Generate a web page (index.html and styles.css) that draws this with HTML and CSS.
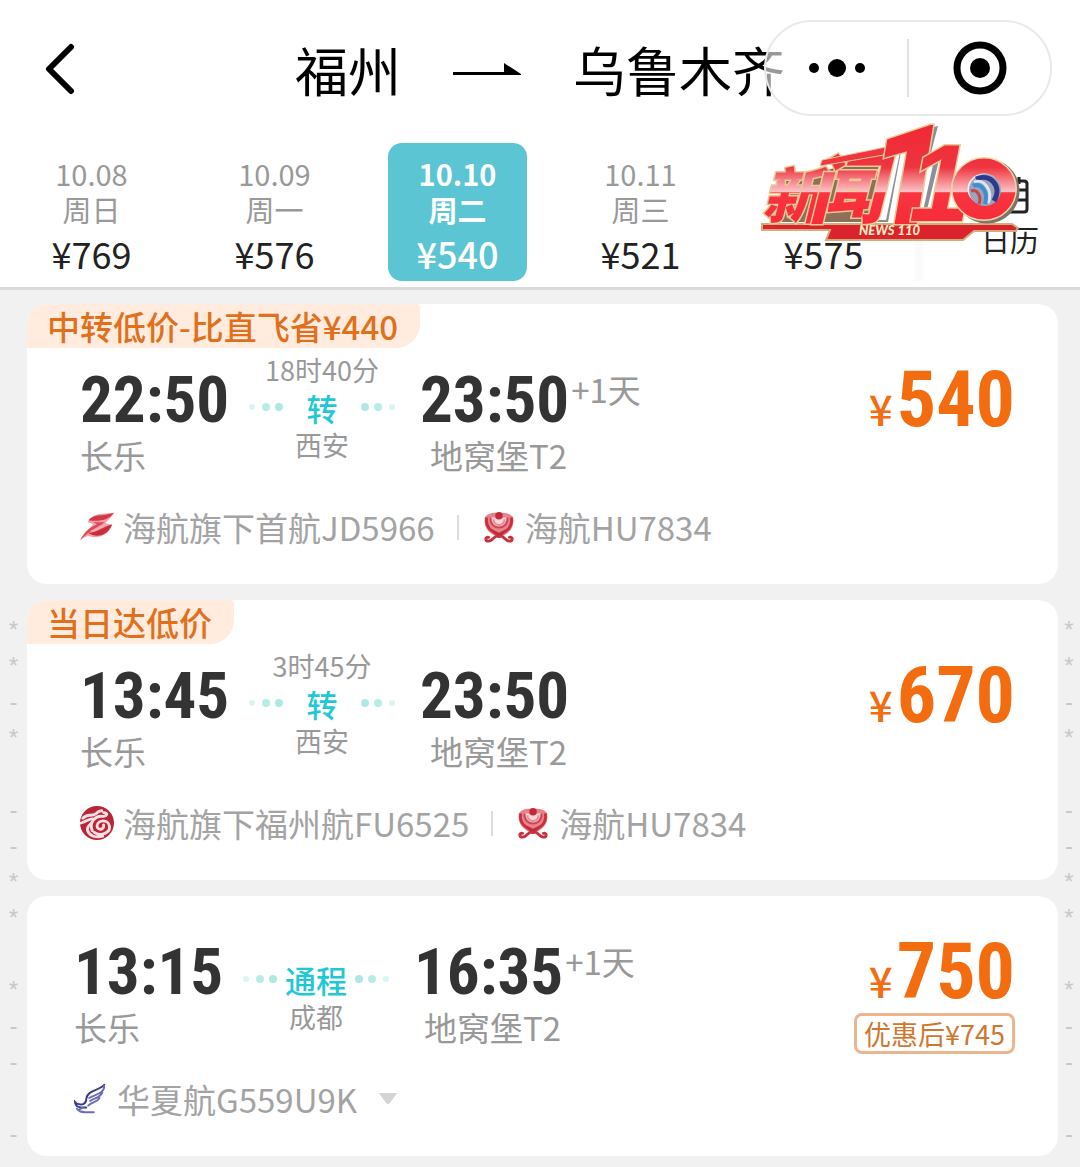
FILE: index.html
```html
<!DOCTYPE html>
<html lang="zh-CN">
<head>
<meta charset="utf-8">
<meta name="viewport" content="width=device-width, initial-scale=1">
<title>福州 - 乌鲁木齐</title>
<link rel="stylesheet" href="styles.css">
</head>
<body>

<!-- shared icons -->
<svg class="defs" aria-hidden="true">
  <symbol id="hainan" viewBox="0 0 36 36">
    <path d="M3 8 C1 20 9 26 18 29 C27 26 35 20 33 8 C30 3 24 3 18 3 C12 3 6 3 3 8Z" fill="#e8838c"/>
    <path d="M5 8 C3 19 11 23 18 27 C25 23 33 19 31 8" fill="none" stroke="#c9303d" stroke-width="3"/>
    <path d="M9 8 C8 22 28 22 27 8" fill="#f7d5d8" stroke="#cf4450" stroke-width="2"/>
    <path d="M12 10 C13 18 23 18 24 10" fill="none" stroke="#e58a92" stroke-width="2"/>
    <circle cx="18" cy="6" r="4" fill="#c22a38"/>
    <path d="M10 20 L18 29 L26 20 L18 24Z" fill="#c22a38"/>
    <path d="M17 28 C13 26 12 33 7 33 C3 33 3 28 7 29 M19 28 C23 26 24 33 29 33 C33 33 33 28 29 29" fill="none" stroke="#c9303d" stroke-width="3" stroke-linecap="round"/>
  </symbol>
  <symbol id="capital" viewBox="0 0 36 36">
    <path d="M0 32 C5 25 10 19 14 15 L8 13 C12 7 18 4 23 4 L36 3 C33 9 29 11 27 14 L34 16 C31 25 21 31 11 28 C7 27 4 29 0 32Z" fill="#f3a0a8"/>
    <path d="M9 11 C16 3 22 8 36 3 C29 12 20 12 9 11Z" fill="#d53845"/>
    <path d="M14 13 L26 13 C20 18 11 21 0 32 C6 20 13 18 18 15Z" fill="#d94b57"/>
    <path d="M8 24 C17 25 23 18 34 15 C30 26 19 31 8 24Z" fill="#cb2d3b"/>
    <path d="M12 22 C19 21 23 18 27 15" fill="none" stroke="#f6bdc2" stroke-width="1"/>
  </symbol>
  <symbol id="fuzhou" viewBox="0 0 36 36">
    <circle cx="18" cy="18" r="18" fill="#b82536"/>
    <path d="M3 13 C8 7 12 12 17 8 C19 6 20 5 23 5 M1 18 C8 16 12 12 14 14 C16 17 6 20 8 26 C10 32 17 34 24 32 M13 26 C9 17 17 10 24 11 C29 11 30 7 25 7 M15 28 C22 33 33 28 31 21 C30 14 19 14 18 21 C18 26 26 26 25 20" fill="none" stroke="#fbdfe1" stroke-width="3" stroke-linecap="round"/>
  </symbol>
  <symbol id="huaxia" viewBox="0 0 36 36">
    <path d="M32 3 C28 9 14 8 13 18 C13 23 9 25 3 23 L1 21 C2 28 8 27 13 27" fill="none" stroke="#3a3a8c" stroke-width="2" stroke-linecap="round"/>
    <path d="M32 4 C32 13 22 13 16 17 M30 11 C28 17 21 17 17 20 M27 17 C25 21 19 21 15 25 M3 28 C6 33 14 32 21 32 M10 27 C4 29 4 32 11 32" fill="none" stroke="#6c6cb8" stroke-width="2" stroke-linecap="round"/>
  </symbol>
  <symbol id="dots" viewBox="0 0 38 12">
    <circle cx="6" cy="6" r="3" fill="#d9f5f5"/>
    <circle cx="20" cy="6" r="4" fill="#b9ece9"/>
    <circle cx="33" cy="6" r="4" fill="#b0e8e5"/>
  </symbol>
</svg>

<header class="top">
  <div class="title-bar">
    <button class="back" type="button" aria-label="返回">
      <svg width="30" height="52" viewBox="0 0 30 52"><path d="M26 4 L4 26 L26 48" fill="none" stroke="#000" stroke-width="6" stroke-linecap="round" stroke-linejoin="round"/></svg>
    </button>
    <h1 class="route">
      <span>福州</span>
      <svg width="68" height="16" viewBox="0 0 68 16"><path d="M0 11 H51 V2 L68 13 V14 H0Z" fill="#000"/></svg>
      <span>乌鲁木齐</span>
    </h1>
    <div class="capsule">
      <button type="button" aria-label="更多">
        <svg width="58" height="20" viewBox="0 0 58 20"><circle cx="6" cy="10" r="5"/><circle cx="29" cy="10" r="9"/><circle cx="52" cy="10" r="5"/></svg>
      </button>
      <button type="button" aria-label="关闭">
        <svg width="54" height="54" viewBox="0 0 54 54"><circle cx="27" cy="27" r="23" fill="none" stroke="#000" stroke-width="7"/><circle cx="27" cy="27" r="10"/></svg>
      </button>
    </div>
  </div>

  <nav class="dates">
    <button class="day" type="button"><span>10.08</span><span>周日</span><b>¥769</b></button>
    <button class="day" type="button"><span>10.09</span><span>周一</span><b>¥576</b></button>
    <button class="day active" type="button" aria-current="date"><span>10.10</span><span>周二</span><b>¥540</b></button>
    <button class="day" type="button"><span>10.11</span><span>周三</span><b>¥521</b></button>
    <button class="day" type="button"><span></span><span></span><b>¥575</b></button>
    <button class="calendar" type="button">
      <svg width="36" height="40" viewBox="0 0 36 40"><path d="M5 6 H31 Q34 6 34 9 V34 Q34 37 31 37 H5 Q2 37 2 34 V9 Q2 6 5 6Z M2 15 H34 M10 25 H34 M10 2 V9 M26 2 V9" fill="none" stroke="#222" stroke-width="3"/></svg>
      <span>日历</span>
    </button>
  </nav>

  <!-- programme logo over the date strip -->
  <svg class="news-logo" width="264" height="124" viewBox="0 0 264 124" role="img" aria-label="新闻110">
    <defs>
      <linearGradient id="red" gradientUnits="userSpaceOnUse" x1="0" y1="10" x2="0" y2="108">
        <stop offset="0" stop-color="#f02a35"/>
        <stop offset=".38" stop-color="#ee3540"/>
        <stop offset=".63" stop-color="#fbc3c6"/>
        <stop offset=".64" stop-color="#f9353f"/>
        <stop offset="1" stop-color="#f52a38"/>
      </linearGradient>
    </defs>
    <path d="M26 60 L66 50 L120 38 L110 102 L14 102Z" fill="#8d7058"/>
    <path d="M126 32 L142 26 L128 102 L108 102Z" fill="#8c8f98"/>
    <path d="M127 32 L134 30 L118 100 L112 100Z" fill="#27358c"/>
    <path d="M132 34 L140 32 L126 100 L117 100Z" fill="#fff"/>
    <path d="M170 8 L178 6 L168 44 L180 36 L164 102 L150 102Z" fill="#8c8f98"/>
    <path d="M165 42 L174 40 L162 96 L153 98Z" fill="#fff"/>
    <path d="M165 42 L174 40 L173 45 L164 47Z" fill="#27358c"/>
    <path d="M2 104 H252 L258 108 L256 111 H214 L203 120 H66 L70 110 H2Z" fill="#dc222c" stroke="#cfae7c" stroke-width="2"/>
    <text class="logo-cn" x="2" y="98" font-size="60">新</text>
    <text class="logo-cn" x="49" y="97" font-size="74">闻</text>
    <path d="M62 40 L126 27 L124 35 L60 46Z" fill="#ee3540" stroke="#e9c995" stroke-width="1"/>
    <text class="logo-num" x="109" y="104" font-size="138">1</text>
    <text class="logo-num slab" x="149" y="101" font-size="110">1</text>
    <ellipse cx="227" cy="71" rx="24" ry="24" fill="none" stroke="#7d7568" stroke-width="17"/>
    <ellipse cx="224" cy="69" rx="24" ry="23" fill="none" stroke="#f0d6a8" stroke-width="18"/>
    <ellipse cx="224" cy="69" rx="24" ry="23" fill="#f6f6fa" stroke="url(#red)" stroke-width="15"/>
    <circle cx="225" cy="70" r="16" fill="#9aa3b8"/>
    <path d="M216 59 C230 53 243 66 234 81" fill="none" stroke="#2b3a8c" stroke-width="5"/>
    <path d="M214 62 C223 58 234 70 228 83" fill="none" stroke="#dfe6f0" stroke-width="3"/>
    <path d="M213 66 C220 62 229 71 225 84" fill="none" stroke="#3f8fd0" stroke-width="4"/>
    <path d="M211 71 C217 69 222 76 219 84" fill="none" stroke="#c4454e" stroke-width="3"/>
    <text class="logo-en" x="99" y="115">NEWS 110</text>
  </svg>
</header>

<main class="list">
<div class="marks" aria-hidden="true">*
*
-
*

-
-
*
*

*
-
-

-</div>

<div class="cards">
  <article class="card">
    <p class="tag">中转低价-比直飞省¥440</p>
    <div class="trip">
      <div class="stop"><time>22:50</time><p>长乐</p></div>
      <div class="via">
        <p>18时40分</p>
        <p class="kind"><svg><use href="#dots"/></svg><b>转</b><svg class="flip"><use href="#dots"/></svg></p>
        <p>西安</p>
      </div>
      <div class="stop arrive"><time>23:50</time><sup>+1天</sup><p>地窝堡T2</p></div>
      <div class="price"><p class="fare"><i>¥</i>540</p></div>
    </div>
    <div class="airlines">
      <span><svg><use href="#capital"/></svg>海航旗下首航JD5966</span>
      <span><svg><use href="#hainan"/></svg>海航HU7834</span>
    </div>
  </article>

  <article class="card">
    <p class="tag">当日达低价</p>
    <div class="trip">
      <div class="stop"><time>13:45</time><p>长乐</p></div>
      <div class="via">
        <p>3时45分</p>
        <p class="kind"><svg><use href="#dots"/></svg><b>转</b><svg class="flip"><use href="#dots"/></svg></p>
        <p>西安</p>
      </div>
      <div class="stop arrive"><time>23:50</time><p>地窝堡T2</p></div>
      <div class="price"><p class="fare"><i>¥</i>670</p></div>
    </div>
    <div class="airlines">
      <span><svg><use href="#fuzhou"/></svg>海航旗下福州航FU6525</span>
      <span><svg><use href="#hainan"/></svg>海航HU7834</span>
    </div>
  </article>

  <article class="card plain">
    <div class="trip">
      <div class="stop"><time>13:15</time><p>长乐</p></div>
      <div class="via">
        <p></p>
        <p class="kind"><svg><use href="#dots"/></svg><b>通程</b><svg class="flip"><use href="#dots"/></svg></p>
        <p>成都</p>
      </div>
      <div class="stop arrive"><time>16:35</time><sup>+1天</sup><p>地窝堡T2</p></div>
      <div class="price"><p class="fare"><i>¥</i>750</p><p class="deal">优惠后¥745</p></div>
    </div>
    <div class="airlines">
      <span><svg><use href="#huaxia"/></svg>华夏航G559U9K</span>
      <svg class="more" viewBox="0 0 18 12"><path d="M0 0 H18 L11 10 Q9 12 7 10Z" fill="#d4d4d4"/></svg>
    </div>
  </article>
</div>

<div class="marks" aria-hidden="true">*
*
-
*

-
-
*
*

*
-
-

-</div>
</main>

</body>
</html>
```
FILE: styles.css
```css
* {
  box-sizing: border-box;
}

body {
  margin: 0;
  background: #f1f1f1;
  color: #222;
  font-family: "Noto Sans CJK SC", sans-serif;
}

p, h1 {
  margin: 0;
  font-weight: normal;
}

button {
  border: 0;
  padding: 0;
  background: none;
  color: inherit;
  font: inherit;
}

svg {
  display: block;
  flex: none;
}

.defs {
  position: absolute;
  width: 0;
  height: 0;
}

/* header */
.top {
  position: relative;
  background: #fff;
  border-bottom: 3px solid #dadada;
}

.title-bar {
  display: flex;
  align-items: center;
  height: 143px;
  padding: 0 45px 6px;
}

.back {
  width: 30px;
}

.route {
  flex: 1;
  display: flex;
  justify-content: center;
  align-items: center;
  gap: 52px;
  margin-right: 30px;
  color: #000;
  font-size: 53px;
  line-height: 80px;
  white-space: nowrap;
}

.capsule {
  position: absolute;
  top: 20px;
  right: 28px;
  display: flex;
  align-items: center;
  width: 288px;
  height: 96px;
  border: 2px solid #e9e9e9;
  border-radius: 48px;
  background: rgba(255, 255, 255, .6);
}

.capsule button {
  flex: 1;
  display: flex;
  justify-content: center;
  align-items: center;
  height: 58px;
}

.capsule button + button {
  border-left: 2px solid #e0e0e0;
}

.dates {
  display: grid;
  grid-template-columns: repeat(5, 1fr) 165px;
  padding-bottom: 6px;
}

.day {
  display: flex;
  flex-direction: column;
  align-items: center;
  height: 138px;
  margin: 0 22px;
  padding-top: 12px;
  border-radius: 14px;
  color: #999;
  font-size: 29px;
  line-height: 36px;
}

.day span {
  height: 36px;
}

.day b {
  color: #222;
  font-size: 36px;
  font-weight: normal;
  line-height: 52px;
}

.day.active {
  background: #5bc5d3;
  color: #fff;
  font-weight: bold;
}

.day.active b {
  color: #fff;
  font-weight: 500;
}

.calendar {
  display: flex;
  flex-direction: column;
  align-items: flex-end;
  gap: 4px;
  padding: 32px 41px 0 0;
  border-left: 8px solid #fafafa;
  font-size: 29px;
  line-height: 40px;
}

.calendar svg {
  margin-right: 10px;
}

.news-logo {
  position: absolute;
  top: 120px;
  right: 56px;
}

.logo-cn, .logo-num, .logo-en {
  font-style: italic;
  font-weight: 900;
}

.logo-cn, .logo-num {
  fill: url(#red);
  stroke: #e9c995;
  stroke-width: 3px;
  paint-order: stroke;
}

.logo-num {
  font-family: Roboto, sans-serif;
}

.logo-num.slab {
  font-family: "Liberation Sans", sans-serif;
}

.logo-en {
  fill: #fbeec4;
  font-family: Lato, sans-serif;
  font-size: 13px;
}

/* results */
.list {
  display: grid;
  grid-template-columns: 27px 1fr 22px;
  padding: 14px 0 10px;
}

.marks {
  padding-top: 308px;
  color: #c8c8c8;
  font-family: "Liberation Sans", sans-serif;
  font-size: 24px;
  line-height: 36px;
  text-align: center;
  white-space: pre;
}

.cards {
  display: flex;
  flex-direction: column;
  gap: 16px;
}

.card {
  padding: 0 43px 35px 53px;
  border-radius: 20px;
  background: #fff;
}

.plain {
  padding-top: 24px;
  padding-left: 47px;
}

.tag {
  width: fit-content;
  margin-left: -53px;
  padding: 0 22px 0 20px;
  border-radius: 20px 4px 24px 0;
  background: #ffecdf;
  color: #e0701c;
  font-size: 33px;
  font-weight: 500;
  line-height: 44px;
}

.trip {
  display: grid;
  grid-template-columns: 166px 152px 1fr auto;
  padding-top: 3px;
}

.stop {
  padding-top: 16px;
  color: #999;
  font-size: 33px;
  line-height: 44px;
}

.stop time {
  display: inline-block;
  color: #333;
  font-family: "Roboto Condensed", "Liberation Sans Narrow", sans-serif;
  font-size: 65px;
  font-weight: bold;
  line-height: 66px;
  vertical-align: top;
}

.stop sup {
  display: inline-block;
  margin-left: 2px;
  font-size: 33px;
  vertical-align: top;
}

.arrive {
  padding-left: 22px;
}

.arrive p {
  padding-left: 10px;
}

.via {
  color: #999;
  font-size: 27px;
  line-height: 37px;
  text-align: center;
}

.via p {
  height: 37px;
}

.via .kind {
  display: flex;
  justify-content: space-between;
  align-items: center;
  height: 38px;
  color: #1fc8d6;
  font-size: 31px;
}

.kind b {
  font-weight: 500;
  margin: 0 -4px;
}

.kind svg {
  width: 38px;
  height: 12px;
}

.kind .flip {
  transform: scaleX(-1);
}

.price {
  display: flex;
  flex-direction: column;
  align-items: flex-end;
  padding-top: 16px;
  color: #f36c10;
}

.fare {
  height: 66px;
  font-family: "Roboto Condensed", "Liberation Sans Narrow", sans-serif;
  font-size: 78px;
  font-weight: bold;
  line-height: 66px;
}

.fare i {
  margin-right: 4px;
  font-family: "Noto Sans CJK SC", sans-serif;
  font-size: 42px;
  font-style: normal;
  font-weight: 500;
  line-height: 40px;
}

.deal {
  margin: 8px 0 -10px;
  padding: 0 7px;
  border: 3px solid #edb58d;
  border-radius: 8px;
  color: #cf762f;
  font-size: 27px;
  line-height: 35px;
}

.airlines {
  display: flex;
  align-items: center;
  height: 44px;
  margin-top: 28px;
  color: #a3a3a3;
  font-size: 33px;
  line-height: 44px;
}

.airlines span {
  display: flex;
  align-items: center;
  gap: 9px;
}

.airlines span svg {
  width: 34px;
  height: 34px;
}

.airlines span + span::before {
  content: "";
  width: 2px;
  height: 25px;
  margin: 0 14px 0 22px;
  background: #ddd;
}

.airlines .more {
  width: 18px;
  height: 12px;
  margin-left: 22px;
}
```
